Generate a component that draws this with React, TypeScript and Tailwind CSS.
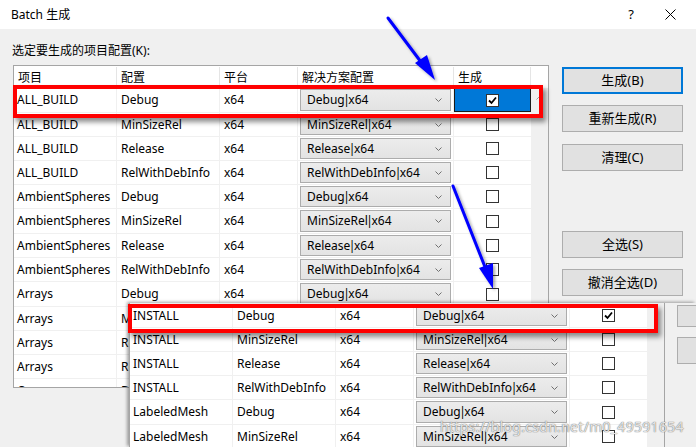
const mainRows: [string, string][] = [
  ["ALL_BUILD", "Debug"],
  ["ALL_BUILD", "MinSizeRel"],
  ["ALL_BUILD", "Release"],
  ["ALL_BUILD", "RelWithDebInfo"],
  ["AmbientSpheres", "Debug"],
  ["AmbientSpheres", "MinSizeRel"],
  ["AmbientSpheres", "Release"],
  ["AmbientSpheres", "RelWithDebInfo"],
  ["Arrays", "Debug"],
  ["Arrays", "MinSizeRel"],
  ["Arrays", "Release"],
  ["Arrays", "RelWithDebInfo"],
  ["Cone", "Debug"],
];
// row pitch in the screenshot is not quite even (scaled capture)
const mainTall = [0, 5, 8];

const pastedRows: [string, string][] = [
  ["INSTALL", "Debug"],
  ["INSTALL", "MinSizeRel"],
  ["INSTALL", "Release"],
  ["INSTALL", "RelWithDebInfo"],
  ["LabeledMesh", "Debug"],
  ["LabeledMesh", "MinSizeRel"],
];
const pastedTall = [4];

function Check({ checked }: { checked?: boolean }) {
  return (
    <div className="w-[13px] h-[13px] border border-[#333] bg-white flex items-center justify-center">
      {checked && (
        <svg width="11" height="11" viewBox="0 0 11 11">
          <path d="M2 5.5 L4.5 8 L9 2.5" fill="none" stroke="#000" strokeWidth="1.8" />
        </svg>
      )}
    </div>
  );
}

function Combo({ value }: { value: string }) {
  return (
    <div className="mx-[2px] my-[1px] flex-1 flex items-center justify-between pl-[6px] pr-[8px] border border-[#acacac] bg-[linear-gradient(#ececec,#e3e3e3)]">
      <span>
        {value}
        <span className="-mx-[1.5px]">|</span>x64
      </span>
      <svg width="7" height="4" viewBox="0 0 7 4">
        <path d="M0.5 0.5 L3.5 3.5 L6.5 0.5" fill="none" stroke="#707070" strokeWidth="1" />
      </svg>
    </div>
  );
}

function Row({
  project,
  config,
  checked,
  selected,
  tall,
}: {
  project: string;
  config: string;
  checked?: boolean;
  selected?: boolean;
  tall?: boolean;
}) {
  return (
    <div className={`flex ${tall ? "h-[25px]" : "h-[24px]"} shrink-0 border-b border-[#f0f0f0] bg-white`}>
      <div className="w-[103px] pl-[3px] flex items-center border-r border-[#f0f0f0]">{project}</div>
      <div className="w-[103px] pl-[4px] flex items-center border-r border-[#f0f0f0]">{config}</div>
      <div className="w-[78px] pl-[4px] flex items-center border-r border-[#f0f0f0]">x64</div>
      <div className="w-[156px] flex border-r border-[#f0f0f0]">
        <Combo value={config} />
      </div>
      <div className={`w-[77px] flex items-center justify-center ${selected ? "bg-[#0078d7] border border-[#1a1a1a]" : ""}`}>
        <Check checked={checked} />
      </div>
    </div>
  );
}

function Button({ label, focused, className = "" }: { label: string; focused?: boolean; className?: string }) {
  return (
    <div
      className={`h-[27px] flex items-center justify-center bg-[#e1e1e1] ${
        focused ? "border-2 border-[#0078d7]" : "border border-[#adadad]"
      } ${className}`}
    >
      {label}
    </div>
  );
}

export default function App() {
  return (
    <div className="relative w-[696px] h-[447px] overflow-hidden bg-[#f0f0f0] text-[12px] text-black font-['Noto_Sans','Noto_Sans_CJK_SC',sans-serif]">
      {/* Title bar */}
      <div className="h-[29px] bg-white flex items-center pl-[11px] pr-[20px]">
        <span className="flex-1">Batch 生成</span>
        <span className="mr-[31px] text-[13px]">?</span>
        <svg width="11" height="11" viewBox="0 0 11 11">
          <path d="M0.5 0.5 L10.5 10.5 M10.5 0.5 L0.5 10.5" stroke="#000" strokeWidth="1" />
        </svg>
      </div>

      {/* Body */}
      <div className="flex pl-[13px] border-l-2 border-[#6b5b6b] -ml-[2px] h-[418px]">
        <div className="w-[536px]">
          <div className="pt-[14px] pb-[6px] h-[36px] leading-[16px] -ml-px">选定要生成的项目配置(K):</div>
          <div className="h-[323px] border border-[#a5a5a5] flex flex-col bg-white overflow-hidden">
            <div className="flex h-[22px] shrink-0 pt-px">
              <div className="w-[103px] pl-[4px] flex items-center border-r border-[#e5e5e5]">项目</div>
              <div className="w-[103px] pl-[4px] flex items-center border-r border-[#e5e5e5]">配置</div>
              <div className="w-[78px] pl-[4px] flex items-center border-r border-[#e5e5e5]">平台</div>
              <div className="w-[156px] pl-[4px] flex items-center border-r border-[#e5e5e5]">解决方案配置</div>
              <div className="w-[77px] pl-[4px] flex items-center border-r border-[#e5e5e5]">生成</div>
              <div className="flex-1" />
            </div>
            <div className="flex flex-1 min-h-0">
              <div className="w-[517px] flex flex-col overflow-hidden">
                {mainRows.map(([p, c], i) => (
                  <Row key={i} project={p} config={c} checked={i === 0} selected={i === 0} tall={mainTall.includes(i)} />
                ))}
              </div>
              <div className="flex-1 bg-[#f0f0f0] flex justify-center pt-[8px]">
                <svg width="7" height="4" viewBox="0 0 7 4">
                  <path d="M0.5 3.5 L3.5 0.5 L6.5 3.5" fill="none" stroke="#a0a0a0" strokeWidth="1" />
                </svg>
              </div>
            </div>
          </div>
        </div>

        <div className="ml-[13px] w-[121px] flex flex-col pt-[38px] text-[13px]">
          <Button label="生成(B)" focused />
          <Button label="重新生成(R)" className="mt-[11px]" />
          <Button label="清理(C)" className="mt-[12px]" />
          <Button label="全选(S)" className="mt-[60px]" />
          <Button label="撤消全选(D)" className="mt-[11px]" />
        </div>
      </div>

      {/* Pasted screenshot */}
      <div className="absolute left-[129px] top-[303px] w-[567px] h-[144px] flex bg-[#f0f0f0] shadow-[-2px_-1px_3px_rgba(0,0,0,0.35)]">
        <div className="w-[536px] border-x border-[#a5a5a5] flex pt-px">
          <div className="w-[517px] flex flex-col">
            {pastedRows.map(([p, c], i) => (
              <Row key={i} project={p} config={c} checked={i === 0} tall={pastedTall.includes(i)} />
            ))}
          </div>
          <div className="flex-1 bg-[#f0f0f0]" />
        </div>
        <div className="flex-1 pl-[12px] flex flex-col pt-[2px]">
          <div className="h-[22px] bg-[#e1e1e1] border border-r-0 border-[#adadad]" />
          <div className="h-[27px] mt-[10px] bg-[#e1e1e1] border border-r-0 border-[#adadad]" />
        </div>
      </div>

      {/* Red highlight boxes */}
      <div className="absolute left-[13px] top-[85px] w-[530px] h-[33px] border-4 border-[#ff0000] shadow-[3px_4px_5px_rgba(0,0,0,0.45)]" />
      <div className="absolute left-[128px] top-[304px] w-[530px] h-[29px] border-4 border-[#ff0000] shadow-[3px_4px_5px_rgba(0,0,0,0.45)]" />

      {/* Blue arrows */}
      <svg className="absolute inset-0 pointer-events-none" width="696" height="447" viewBox="0 0 696 447">
        <defs>
          <filter id="sh" x="-20%" y="-20%" width="140%" height="140%">
            <feDropShadow dx="2" dy="2" stdDeviation="1.5" floodColor="#000" floodOpacity="0.35" />
          </filter>
        </defs>
        <g filter="url(#sh)" fill="#0000ff" stroke="#0000ff">
          <line x1="388" y1="18" x2="424" y2="66" strokeWidth="3" strokeLinecap="round" />
          <polygon points="435,80 415,63 427,55" stroke="none" />
          <line x1="453" y1="186" x2="487" y2="272" strokeWidth="3" strokeLinecap="round" />
          <polygon points="493,289 479,268 493,263" stroke="none" />
        </g>
      </svg>

      {/* Watermark */}
      <div className="absolute left-[440px] top-[416px] text-[14px] tracking-[0.3px] text-white/80 [text-shadow:0_0_1px_#777,0_0_1px_#777]">
        https://blog.csdn.net/m0_49591654
      </div>
    </div>
  );
}
